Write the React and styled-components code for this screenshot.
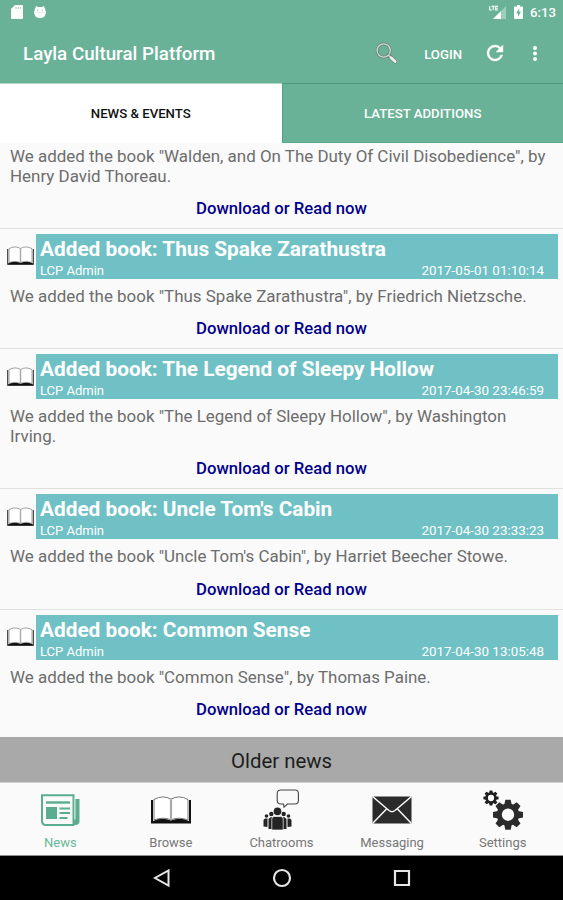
import React from "react";
import styled, { createGlobalStyle } from "styled-components";

const posts = [
  {
    body: 'We added the book "Walden, and On The Duty Of Civil Disobedience", by Henry David Thoreau.',
  },
  {
    title: "Added book: Thus Spake Zarathustra",
    date: "2017-05-01 01:10:14",
    body: 'We added the book "Thus Spake Zarathustra", by Friedrich Nietzsche.',
  },
  {
    title: "Added book: The Legend of Sleepy Hollow",
    date: "2017-04-30 23:46:59",
    body: 'We added the book "The Legend of Sleepy Hollow", by Washington Irving.',
  },
  {
    title: "Added book: Uncle Tom's Cabin",
    date: "2017-04-30 23:33:23",
    body: 'We added the book "Uncle Tom\'s Cabin", by Harriet Beecher Stowe.',
  },
  {
    title: "Added book: Common Sense",
    date: "2017-04-30 13:05:48",
    body: 'We added the book "Common Sense", by Thomas Paine.',
  },
];

const SdCardIcon = () => (
  <svg width="12" height="14" viewBox="0 0 12 14">
    <path d="M4 0h7q1 0 1 1v12q0 1-1 1H1q-1 0-1-1V4z" fill="#fff" />
    <path d="M5 2v2M7.3 2v2M9.6 2v2" stroke="#69b297" strokeWidth="0.6" />
  </svg>
);

const DroidIcon = () => (
  <svg width="12" height="14" viewBox="0 0 12 14">
    <path
      d="M2 .8l1.500 1.100h5L10 .8l.6 2.200Q11.500 4.200 11.500 6l.5.300v2l-.5.400Q11 13 6 13T.5 8.700L0 8.300v-2L.5 6q0-1.800.9-3z"
      fill="#fff"
    />
    <path d="M.8 7.200h10.400" stroke="#69b297" strokeWidth="0.4" opacity=".6" />
    <circle cx="3.700" cy="5" r=".6" fill="#69b297" />
    <circle cx="8.300" cy="5" r=".6" fill="#69b297" />
  </svg>
);

const SignalIcon = () => (
  <svg width="18" height="15" viewBox="0 0 18 15">
    <path d="M17 1v13H4z" fill="#fff" opacity=".35" />
    <path d="M12 6v8H4z" fill="#fff" />
    <path
      d="M.7 1v4h2M2.600 1.400h3M4.200 1.400v3.800M9 1.400H6.700V5H9M6.700 3.200h2"
      fill="none"
      stroke="#fff"
      strokeWidth="1.100"
    />
  </svg>
);

const BatteryIcon = () => (
  <svg width="9" height="14" viewBox="0 0 9 14">
    <path d="M3 0h3v1.500h2q1 0 1 1V13q0 1-1 1H1q-1 0-1-1V2.500q0-1 1-1h2z" fill="#fff" />
    <path d="M5.200 3.500L2 8.300h2v3.400l3-4.900H5.200z" fill="#69b297" />
  </svg>
);

const SearchIcon = () => (
  <svg width="24" height="24" viewBox="0 0 24 24" fill="none">
    <path d="M13.500 13.300l6.500 6.200" stroke="#71877c" strokeWidth="4.200" strokeLinecap="round" />
    <circle cx="8.700" cy="8.500" r="6.600" stroke="#6b8176" strokeWidth="2.800" />
    <circle cx="8.700" cy="8.500" r="6.600" stroke="#d0d8d4" strokeWidth="1.300" />
    <path d="M13.500 13.200l2.300 2.200" stroke="#d0d8d4" strokeWidth="1.400" />
    <path d="M16.100 15.800l4 3.800" stroke="#eef0ef" strokeWidth="2.800" strokeLinecap="round" />
  </svg>
);

const RefreshIcon = () => (
  <svg width="24" height="24" viewBox="0 0 24 24">
    <path
      d="M17.650 6.350A7.960 7.960 0 0 0 12 4a8 8 0 1 0 7.730 10h-2.080A6 6 0 1 1 12 6c1.660 0 3.140.690 4.220 1.780L13 11h7V4z"
      transform="translate(0 -1)"
      fill="#fff"
      stroke="#fff"
      strokeWidth=".4"
    />
  </svg>
);

const MoreIcon = () => (
  <svg width="6" height="18" viewBox="0 0 6 18" fill="#fff">
    <circle cx="3" cy="3" r="2" />
    <circle cx="3" cy="8.500" r="2" />
    <circle cx="3" cy="14" r="2" />
  </svg>
);

const BookIcon = ({ width, height, edge = 1.6, edgeColor = "#333" }) => (
  <svg width={width} height={height} viewBox="0 0 40 28">
    <path d="M1 4v22.500h38V4" fill="#fff" stroke={edgeColor} strokeWidth={edge} />
    <path d="M1 27l1-2q9-4 18-.5Q29 21 38 25l1 2z" fill="#111" />
    <path
      d="M3 3.500Q12-1.500 20 3.200 28-1.500 37 3.500V24q-9-3.500-17-.2Q12 20.500 3 24z"
      fill="#fff"
      stroke="#555"
      strokeWidth=".8"
    />
    <path d="M20 3.200v20.600" stroke="#aaa" strokeWidth="2.200" />
  </svg>
);

const NewsIcon = () => (
  <svg width="40" height="32" viewBox="0 0 40 32" fill="none">
    <path d="M34 5h5.500v22q0 4-4 4H5z" fill="#5aad8e" />
    <path d="M2 1.300h31.500V31H6q-4 0-4-4z" fill="#fafafa" stroke="#5aad8e" strokeWidth="2" />
    <path d="M34.900 4.500v21" stroke="#fafafa" strokeWidth="1" />
    <path d="M6 8.500h24" stroke="#5aad8e" strokeWidth="2.400" />
    <path d="M6 13h11v12H6z" fill="#5aad8e" />
    <path d="M19.500 14.500H30M19.500 19H30M19.500 24h8" stroke="#5aad8e" strokeWidth="2" />
  </svg>
);

const ChatIcon = () => (
  <svg width="36" height="42" viewBox="0 0 36 42" fill="#242424">
    <path
      d="M18 1h14q3.400 0 3.400 3.400v7.200q0 3.400-3.400 3.400h-7.500L21 18.200 20.500 15H18q-3.800 0-3.800-3.400V4.400Q14.200 1 18 1z"
      fill="#fafafa"
      stroke="#444"
      strokeWidth="1.100"
    />
    <circle cx="3.500" cy="27" r="1.800" />
    <circle cx="8.300" cy="25" r="2.200" />
    <circle cx="20.700" cy="25" r="2.200" />
    <circle cx="25.500" cy="27" r="1.800" />
    <path d="M.5 37.500V31l1.500-1.500h2.500V38zM28.500 37.500V31L27 29.500h-2.500V38z" />
    <path d="M5.500 40V30l2-1.800h3V40zM23.500 40V30l-2-1.800h-3V40z" />
    <path d="M8.800 41V30q0-2.500 2.500-2.500h6.400q2.500 0 2.500 2.500v11z" stroke="#fafafa" strokeWidth=".7" />
    <circle cx="14.500" cy="22.400" r="3.800" />
  </svg>
);

const MailIcon = () => (
  <svg width="40" height="28" viewBox="0 0 40 28">
    <path d="M.5.5h39v27H.5z" fill="#2c2b2c" />
    <path
      d="M.5.5l16.500 14q3 2.300 6 0L39.500.5M.5 27.500l14-14.500M39.500 27.500l-14-14.500"
      fill="none"
      stroke="#fafafa"
      strokeWidth="1.500"
    />
  </svg>
);

const teeth = [0, 45, 90, 135, 180, 225, 270, 315];

const Gear = ({ x, y, r, color }) => (
  <g transform={`translate(${x} ${y}) scale(${r / 15})`}>
    <circle r="8.700" fill="none" stroke={color} strokeWidth="5" />
    {teeth.map((angle) => (
      <path key={angle} d="M-2.700-15h5.400l1 5h-7.400z" fill={color} transform={`rotate(${angle})`} />
    ))}
  </g>
);

const SettingsIcon = () => (
  <svg width="40" height="40" viewBox="0 0 40 40">
    <Gear x={8} y={8} r={7.6} color="#1d1d1d" />
    <Gear x={25} y={24.7} r={15} color="#2b2b2b" />
  </svg>
);

const navItems = [
  { label: "News", icon: <NewsIcon />, active: true },
  { label: "Browse", icon: <BookIcon width={40} height={28} edge={2} edgeColor="#111" /> },
  { label: "Chatrooms", icon: <ChatIcon /> },
  { label: "Messaging", icon: <MailIcon /> },
  { label: "Settings", icon: <SettingsIcon /> },
];

const App = () => {
  return (
    <Screen>
      <GlobalStyle />
      <StatusBar>
        <StatusGroup $gap={11}>
          <SdCardIcon />
          <DroidIcon />
        </StatusGroup>
        <StatusGroup $gap={7}>
          <SignalIcon />
          <BatteryIcon />
          <Clock>6:13</Clock>
        </StatusGroup>
      </StatusBar>
      <Toolbar>
        <AppTitle>Layla Cultural Platform</AppTitle>
        <Actions>
          <SearchIcon />
          <Login>LOGIN</Login>
          <RefreshIcon />
          <MoreIcon />
        </Actions>
      </Toolbar>
      <Tabs>
        <Tab $active>NEWS &amp; EVENTS</Tab>
        <Tab>LATEST ADDITIONS</Tab>
      </Tabs>
      <Feed>
        {posts.map((post) => (
          <Post key={post.body}>
            {post.title && (
              <PostHead>
                <PostIcon>
                  <BookIcon width={27} height={19.5} />
                </PostIcon>
                <Banner>
                  <PostTitle>{post.title}</PostTitle>
                  <Meta>
                    <span>LCP Admin</span>
                    <PostDate>{post.date}</PostDate>
                  </Meta>
                </Banner>
              </PostHead>
            )}
            <Body>{post.body}</Body>
            <Download>Download or Read now</Download>
          </Post>
        ))}
      </Feed>
      <OlderNews>Older news</OlderNews>
      <BottomNav>
        {navItems.map((item) => (
          <NavItem key={item.label} $active={item.active}>
            <NavIcon>{item.icon}</NavIcon>
            <NavLabel>{item.label}</NavLabel>
          </NavItem>
        ))}
      </BottomNav>
      <SystemBar>
        <svg width="18" height="20" viewBox="0 0 18 20">
          <path d="M15.500 2.500v15L2 10z" fill="none" stroke="#e6e6e6" strokeWidth="2" />
        </svg>
        <svg width="20" height="20" viewBox="0 0 20 20">
          <circle cx="10" cy="10" r="8" fill="none" stroke="#e6e6e6" strokeWidth="2.200" />
        </svg>
        <svg width="18" height="20" viewBox="0 0 18 20">
          <path d="M2 3h14v14H2z" fill="none" stroke="#e6e6e6" strokeWidth="2.200" />
        </svg>
      </SystemBar>
    </Screen>
  );
};

export default App;

const GlobalStyle = createGlobalStyle`
  * {
    box-sizing: border-box;
  }

  body {
    margin: 0;
    font-family: Roboto, sans-serif;
  }

  svg {
    display: block;
    flex-shrink: 0;
  }
`;

const Screen = styled.div`
  display: flex;
  flex-direction: column;
  width: 563px;
  height: 900px;
  overflow: hidden;
  background: #fafafa;
`;

const StatusBar = styled.div`
  display: flex;
  justify-content: space-between;
  height: 24px;
  padding: 0 7px 0 11px;
  background: #69b297;
`;

const StatusGroup = styled.div`
  display: flex;
  align-items: center;
  gap: ${(props) => props.$gap}px;
`;

const Clock = styled.span`
  font-size: 13.2px;
  font-weight: 500;
  color: #fff;
`;

const Toolbar = styled.header`
  display: flex;
  align-items: center;
  justify-content: space-between;
  height: 59px;
  padding: 1px 25px 0 23px;
  background: #69b297;
  color: #fff;
`;

const AppTitle = styled.h1`
  margin: 0;
  font-size: 18.8px;
  font-weight: 500;
  white-space: nowrap;
`;

const Actions = styled.div`
  display: flex;
  align-items: center;
`;

const Login = styled.span`
  margin: 0 21px 0 25px;
  font-size: 13.2px;
  font-weight: 500;

  & + svg + svg {
    margin-left: 25px;
  }
`;

const Tabs = styled.nav`
  display: grid;
  grid-template-columns: 1fr 1fr;
  height: 60px;
`;

const Tab = styled.div`
  display: flex;
  align-items: center;
  justify-content: center;
  border-top: 1px solid ${(props) => (props.$active ? "#b5d5c8" : "#4f957b")};
  border-left: ${(props) => (props.$active ? "none" : "1px solid #4ba386")};
  border-bottom: 1px solid ${(props) => (props.$active ? "#fff" : "#57ab8c")};
  background: ${(props) => (props.$active ? "#fff" : "#69b297")};
  color: ${(props) => (props.$active ? "#111" : "#fff")};
  font-size: 13.2px;
  font-weight: 500;
`;

const Feed = styled.main`
  height: 594px;
  overflow: hidden;
  padding-top: 4px;
`;

const Post = styled.article`
  padding-bottom: 9.1px;

  & + & {
    border-top: 1px solid #e0e0e0;
    padding-top: 5px;
  }
`;

const PostHead = styled.div`
  display: flex;
  height: 45px;
  margin-bottom: 8px;
  padding-right: 5px;
`;

const PostIcon = styled.div`
  display: flex;
  align-items: center;
  width: 35.5px;
  padding: 0 0 1px 7px;
`;

const Banner = styled.div`
  flex: 1;
  padding: 2px 14px 0 4.5px;
  background: #6fc1c5;
  color: #fff;
`;

const PostTitle = styled.h2`
  margin: 0;
  font-size: 20.8px;
  font-weight: 700;
  line-height: 26px;
`;

const Meta = styled.div`
  display: flex;
  justify-content: space-between;
  font-size: 13px;
  line-height: 17px;
`;

const PostDate = styled.span`
  font-size: 13.4px;
`;

const Body = styled.p`
  margin: 0;
  padding: 0 10px;
  color: #6d6d6d;
  font-size: 16.95px;
  line-height: 19.5px;
`;

const Download = styled.div`
  margin-top: 12.9px;
  color: #00008b;
  font-size: 16.7px;
  font-weight: 500;
  line-height: 20px;
  text-align: center;
`;

const OlderNews = styled.div`
  height: 45px;
  background: #a9a9a9;
  color: #1d1d1d;
  font-size: 20.4px;
  line-height: 48px;
  text-align: center;
`;

const BottomNav = styled.nav`
  display: flex;
  height: 74px;
  padding: 0 5px;
  border-top: 1px solid #d0d0d0;
  border-bottom: 1px solid #8f8f8f;
`;

const NavItem = styled.div`
  flex: 1;
  display: flex;
  flex-direction: column;
  align-items: center;
  color: ${(props) => (props.$active ? "#69b79b" : "#777")};
`;

const NavIcon = styled.div`
  display: flex;
  align-items: center;
  height: 54px;
`;

const NavLabel = styled.span`
  font-size: 13px;
  line-height: 12px;
`;

const SystemBar = styled.div`
  display: flex;
  align-items: center;
  justify-content: center;
  gap: 101px;
  height: 44px;
  background: #000;
`;
